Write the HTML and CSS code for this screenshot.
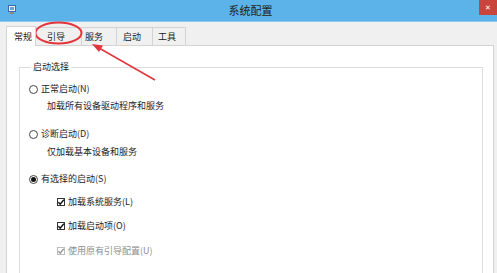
FILE: index.html
```html
<!DOCTYPE html>
<html lang="zh-CN">
<head>
<meta charset="utf-8">
<title>系统配置</title>
<link rel="stylesheet" href="styles.css">
</head>
<body>
<div class="window">
  <div class="titlebar">
    <svg class="app-icon" width="8" height="9" viewBox="0 0 8 9">
      <rect x="0.5" y="0.5" width="7" height="6" fill="#e9f2fb" stroke="#3a6aa8" stroke-width="1"/>
      <rect x="2" y="2" width="4" height="3" fill="#6d9fd6"/>
      <rect x="2" y="7" width="4" height="2" fill="#8a8a8a"/>
    </svg>
    <div class="title">系统配置</div>
    <div class="close">✕</div>
  </div>
  <div class="client">
    <div class="tabs">
      <div class="tab tab-general active">常规</div>
      <div class="tab tab-boot">引导</div>
      <div class="tab tab-services">服务</div>
      <div class="tab tab-startup">启动</div>
      <div class="tab tab-tools">工具</div>
    </div>
    <div class="panel">
      <fieldset class="group">
        <legend>启动选择</legend>
        <div class="row radio-row r1"><span class="radio"></span><span>正常启动(N)</span></div>
        <div class="row desc d1">加载所有设备驱动程序和服务</div>
        <div class="row radio-row r2"><span class="radio"></span><span>诊断启动(D)</span></div>
        <div class="row desc d2">仅加载基本设备和服务</div>
        <div class="row radio-row r3"><span class="radio checked"></span><span>有选择的启动(S)</span></div>
        <div class="row check-row c1"><span class="check"><svg viewBox="0 0 8 8" width="8" height="8"><path d="M1.3 4.2 L3.2 6.1 L6.8 1.8" fill="none" stroke="#111" stroke-width="1.4"/></svg></span><span>加载系统服务(L)</span></div>
        <div class="row check-row c2"><span class="check"><svg viewBox="0 0 8 8" width="8" height="8"><path d="M1.3 4.2 L3.2 6.1 L6.8 1.8" fill="none" stroke="#111" stroke-width="1.4"/></svg></span><span>加载启动项(O)</span></div>
        <div class="row check-row c3 disabled"><span class="check"><svg viewBox="0 0 8 8" width="8" height="8"><path d="M1.3 4.2 L3.2 6.1 L6.8 1.8" fill="none" stroke="#9a9a9a" stroke-width="1.4"/></svg></span><span>使用原有引导配置(U)</span></div>
      </fieldset>
    </div>
  </div>
  <svg class="annotation" width="497" height="273" viewBox="0 0 497 273">
    <ellipse cx="58.5" cy="33" rx="23" ry="10.5" fill="none" stroke="#e2363c" stroke-width="2"/>
    <line x1="155" y1="80" x2="99" y2="48" stroke="#e2363c" stroke-width="1.6"/>
    <polygon points="92,44 103,45.5 99,52" fill="#e2363c"/>
  </svg>
</div>
</body>
</html>
```
FILE: styles.css
```css
html, body {
  margin: 0;
  padding: 0;
}
body {
  width: 497px;
  height: 273px;
  overflow: hidden;
  font-family: "Noto Sans CJK SC", "Noto Sans", sans-serif;
  font-size: 9px;
  color: #1c1c1c;
  background: #f0f0f0;
}
.window {
  position: relative;
  width: 497px;
  height: 273px;
  overflow: hidden;
}
.titlebar {
  height: 21px;
  background: #5cb3e9;
  display: flex;
  align-items: center;
  position: relative;
  border-bottom: 1px solid #8fc8ee;
}
.app-icon {
  margin-left: 8px;
  margin-top: -3px;
  flex: none;
}
.title {
  flex: 1;
  text-align: center;
  font-size: 11px;
  color: #222;
  padding-left: 6px;
  line-height: 21px;
}
.close {
  width: 18px;
  height: 15px;
  align-self: flex-start;
  background: #c9443d;
  color: #fff;
  font-size: 7px;
  line-height: 15px;
  text-align: center;
  flex: none;
}
.client {
  padding: 5px 3px 0 6px;
}
.tabs {
  display: flex;
  height: 18px;
  align-items: flex-end;
}
.tab {
  box-sizing: border-box;
  height: 18px;
  line-height: 17px;
  border: 1px solid #d3d3d3;
  border-bottom: none;
  border-left: none;
  background: #f0f0f0;
  padding-left: 5px;
}
.tab-general { width: 30px; padding-left: 7px; border-left: 1px solid #d3d3d3; }
.tab-boot { width: 46px; padding-left: 11px; }
.tab-services { width: 35px; padding-left: 3px; }
.tab-startup { width: 36px; padding-left: 6px; }
.tab-tools { width: 33px; padding-left: 5px; }
.tab.active {
  background: #fff;
  height: 20px;
  line-height: 19px;
  margin-bottom: -1px;
  position: relative;
  z-index: 1;
}
.panel {
  box-sizing: border-box;
  width: 488px;
  height: 240px;
  background: #fff;
  border: 1px solid #d3d3d3;
  padding: 15px 10px 0 12px;
}
.group {
  margin: 0;
  border: 1px solid #dcdcdc;
  padding: 10px 0 0 9px;
  height: 260px;
}
.group legend {
  padding: 0 2px;
  margin-left: 2px;
  line-height: 12px;
}
.row {
  height: 12px;
  line-height: 12px;
  display: flex;
  align-items: center;
  white-space: nowrap;
}
.radio {
  box-sizing: border-box;
  width: 9px;
  height: 9px;
  border: 1px solid #444;
  border-radius: 50%;
  background: #fff;
  margin-right: 3px;
  display: flex;
  align-items: center;
  justify-content: center;
}
.radio.checked::after {
  content: "";
  width: 5px;
  height: 5px;
  border-radius: 50%;
  background: #111;
}
.desc { padding-left: 18px; }
.d1 { margin-top: 5px; }
.r2 { margin-top: 16px; }
.d2 { margin-top: 6px; }
.r3 { margin-top: 15px; }
.check-row { padding-left: 28px; }
.c1 { margin-top: 11px; }
.c2 { margin-top: 12px; }
.c3 { margin-top: 13px; }
.check {
  box-sizing: border-box;
  width: 8px;
  height: 8px;
  border: 1px solid #333;
  margin-right: 3px;
  display: flex;
  align-items: center;
  justify-content: center;
}
.check svg { flex: none; }
.disabled { color: #8e8e8e; }
.disabled .check { border-color: #bdbdbd; }
.annotation {
  position: absolute;
  left: 0;
  top: 0;
  pointer-events: none;
}
```
